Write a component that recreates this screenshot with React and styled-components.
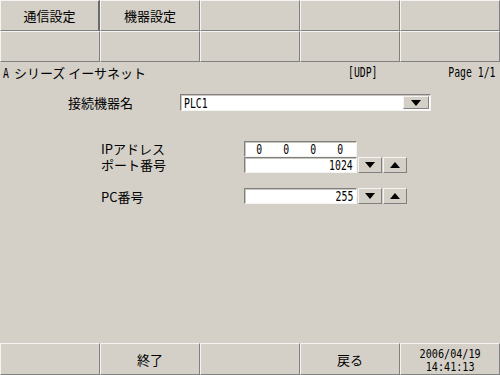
import React from "react";
import styled, { createGlobalStyle } from "styled-components";

const GlobalStyle = createGlobalStyle`
  html, body { margin: 0; padding: 0; background: #d4d0c8; }
  body { font-family: "Noto Sans CJK JP", "DejaVu Sans", sans-serif; }
`;

const LIGHT = "#f4f4f2";
const DARK = "#808080";

const Screen = styled.div`
  width: 500px;
  height: 375px;
  display: flex;
  flex-direction: column;
  background: #d4d0c8;
  color: #000;
  font-size: 13px;
  overflow: hidden;
`;

const KeyGrid = styled.div`
  display: grid;
  grid-template-columns: repeat(5, 100px);
  grid-auto-rows: ${(p) => p.$row}px;
`;

const Key = styled.div`
  box-sizing: border-box;
  display: flex;
  align-items: center;
  justify-content: center;
  border-style: solid;
  border-width: 1px ${(p) => (p.$thick ? 2 : 1)}px 1px 1px;
  border-color: ${LIGHT} ${(p) => (p.$thick ? "#6a6a6a" : DARK)} ${DARK} ${LIGHT};
  line-height: 1;
  white-space: nowrap;
`;

const Mono = styled.span`
  display: inline-block;
  font-family: "DejaVu Sans Mono", monospace;
  font-size: ${(p) => p.$size || 14}px;
  line-height: ${(p) => p.$lh || 14}px;
  transform: scaleX(${(p) => p.$sx || 0.7});
  transform-origin: ${(p) => p.$origin || "left"} center;
  white-space: pre;
  text-align: ${(p) => (p.$origin === "center" ? "center" : "left")};
`;

const Header = styled.div`
  height: 20px;
  display: grid;
  grid-template-columns: 345px 1fr auto;
  align-items: center;
  padding: 0 0 0 3px;
  margin-right: -8px;
  white-space: nowrap;
`;

const Main = styled.div`
  flex: 1;
  display: flex;
  flex-direction: column;
`;

const Row = styled.div`
  display: grid;
  grid-template-columns: ${(p) => p.$label}px auto;
  grid-auto-rows: ${(p) => p.$h || 16}px;
  align-items: center;
  padding-left: ${(p) => p.$left}px;
  margin-top: ${(p) => p.$top || 0}px;
`;

const Label = styled.span`
  white-space: pre;
  line-height: ${(p) => p.$lh || 15}px;
  grid-row: span ${(p) => p.$span || 1};
  grid-column: 1;
`;

const Controls = styled.div`
  display: flex;
  align-items: stretch;
  height: 100%;
  grid-column: 2;
`;

const Sunken = styled.div`
  box-sizing: border-box;
  width: ${(p) => p.$w}px;
  height: 100%;
  background: #fff;
  border-style: solid;
  border-width: 1px;
  border-color: ${DARK} ${LIGHT} ${LIGHT} ${DARK};
  box-shadow: inset 1px 1px 0 #c8c4bc;
  display: flex;
  align-items: center;
  justify-content: ${(p) => (p.$right ? "flex-end" : "flex-start")};
  padding: 0 ${(p) => (p.$right ? 3 : 0)}px 0 ${(p) => (p.$right ? 0 : 3)}px;
  overflow: hidden;
`;

const Octets = styled.div`
  display: grid;
  grid-template-columns: repeat(4, 27px);
  padding-left: 1px;
  justify-items: center;
  width: 100%;
`;

const Raised = styled.div`
  box-sizing: border-box;
  width: ${(p) => p.$w}px;
  margin-left: ${(p) => p.$gap || 0}px;
  height: 100%;
  background: #d4d0c8;
  border-style: solid;
  border-width: 1px;
  border-color: ${LIGHT} ${DARK} ${DARK} ${LIGHT};
  display: flex;
  align-items: center;
  justify-content: center;
`;

const Combo = styled(Sunken)`
  padding: 0 1px 0 3px;
  justify-content: space-between;
`;

const Arrow = ({ up }) => (
  <svg width="10" height="6" viewBox="0 0 10 6">
    {up ? <polygon points="0,6 10,6 5,0" fill="#000" /> : <polygon points="0,0 10,0 5,6" fill="#000" />}
  </svg>
);

const Spin = () => (
  <>
    <Raised $w={24} $gap={1}><Arrow /></Raised>
    <Raised $w={24} $gap={1}><Arrow up /></Raised>
  </>
);

const Footer = styled(KeyGrid)`
  margin-top: auto;
`;

export default function App() {
  return (
    <Screen>
      <GlobalStyle />
      <KeyGrid $row={31}>
        <Key $thick>通信設定</Key>
        <Key>機器設定</Key>
        <Key />
        <Key />
        <Key />
        <Key />
        <Key />
        <Key />
        <Key />
        <Key />
      </KeyGrid>
      <Header>
        <Label>
          <Mono $origin="left" style={{ width: 8 }}>A</Mono> シリーズ イーサネット
        </Label>
        <Mono>[UDP]</Mono>
        <Mono $origin="right" style={{ marginRight: 13 }}>Page 1/1</Mono>
      </Header>
      <Main>
        <Row $left={68} $label={112} $top={12} $h={17}>
          <Label>接続機器名</Label>
          <Combo $w={251}>
            <Mono>PLC1</Mono>
            <Raised $w={26} style={{ height: 13 }}><Arrow /></Raised>
          </Combo>
        </Row>
        <Row $left={101} $label={143} $top={30}>
          <Label $span={2} $lh={16}>{"IPアドレス\nポート番号"}</Label>
          <Controls>
            <Sunken $w={113} style={{ padding: 0 }}>
              <Octets>
                <Mono $origin="center">0</Mono>
                <Mono $origin="center">0</Mono>
                <Mono $origin="center">0</Mono>
                <Mono $origin="center">0</Mono>
              </Octets>
            </Sunken>
          </Controls>
          <Controls>
            <Sunken $w={113} $right><Mono $origin="right">1024</Mono></Sunken>
            <Spin />
          </Controls>
        </Row>
        <Row $left={101} $label={143} $top={15}>
          <Label>PC番号</Label>
          <Controls>
            <Sunken $w={113} $right><Mono $origin="right">255</Mono></Sunken>
            <Spin />
          </Controls>
        </Row>
      </Main>
      <Footer $row={32}>
        <Key />
        <Key>終了</Key>
        <Key />
        <Key>戻る</Key>
        <Key>
          <Mono $origin="center" $size={13} $lh={13} $sx={0.78} style={{ marginTop: 1 }}>
            {"2006/04/19\n14:41:13"}
          </Mono>
        </Key>
      </Footer>
    </Screen>
  );
}
